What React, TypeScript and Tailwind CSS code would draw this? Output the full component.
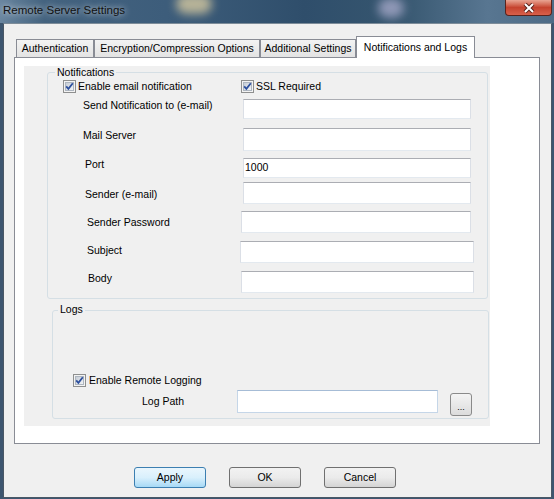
import React from "react";

type FieldProps = {
  label: string;
  row: string;
  labelBox: string;
  input: string;
  value?: string;
};

function CheckMark() {
  return (
    <svg width="13" height="13" viewBox="0 0 13 13" className="shrink-0">
      <defs>
        <linearGradient id="cbfill" x1="0" y1="0" x2="1" y2="1">
          <stop offset="0" stopColor="#c3cad4" />
          <stop offset="1" stopColor="#f4f6f8" />
        </linearGradient>
      </defs>
      <rect x="0.5" y="0.5" width="12" height="12" fill="#f3f3f3" stroke="#8e8f8f" />
      <rect x="2.5" y="2.5" width="8" height="8" fill="url(#cbfill)" stroke="#aeb6c0" />
      <path d="M3.2 6.3 L5.4 8.8 L9.8 3.2" fill="none" stroke="#2c4f9e" strokeWidth="1.8" />
    </svg>
  );
}

function Field(props: FieldProps) {
  return (
    <div className={"flex items-start " + props.row}>
      <span className={"leading-[13px] " + props.labelBox}>{props.label}</span>
      <div
        className={
          "bg-white border border-[#dbdfe6] border-t-[#abadb3] border-b-[#e3e9ef] flex items-center pl-px " +
          props.input
        }
      >
        {props.value}
      </div>
    </div>
  );
}

function WinButton(props: { label: string; primary?: boolean }) {
  return (
    <button
      className={
        props.primary
          ? "w-[72px] h-[21px] rounded-[3px] border border-[#3c7fb1] bg-gradient-to-b from-[#eaf6fd] via-[#d9f0fc] to-[#a7d9f5] text-[10.5px] text-black"
          : "w-[72px] h-[21px] rounded-[3px] border border-[#707070] bg-gradient-to-b from-[#f2f2f2] via-[#ebebeb] to-[#d4d4d4] text-[10.5px] text-black"
      }
    >
      {props.label}
    </button>
  );
}

const tabs = [
  { label: "Authentication", cls: "w-[78px]" },
  { label: "Encryption/Compression Options", cls: "w-[166px]" },
  { label: "Additional Settings", cls: "w-[96px]" },
];

export default function App() {
  return (
    <div className="w-[554px] h-[499px] overflow-hidden bg-[#3d5670] flex flex-col font-['Liberation_Sans',Arial,sans-serif] text-[10.5px] text-black">
      {/* title bar */}
      <div className="relative h-[23px] shrink-0 flex items-start justify-between bg-[linear-gradient(90deg,#6a86a0_0%,#44637f_8%,#3d5d7b_30%,#2f4e6b_55%,#36566f_72%,#587691_88%,#4d6b86_100%)]">
        <div className="absolute left-[176px] top-[-6px] w-[36px] h-[20px] rounded-full bg-[#d6c9a0] blur-[5px] opacity-80" />
        <div className="absolute left-[378px] top-[-2px] w-[26px] h-[20px] rounded-full bg-[#a5a8c8] blur-[5px] opacity-80" />
        <span className="relative pl-[3px] pt-[3px] text-[11.5px] leading-[14px] text-[#111] [text-shadow:0_0_6px_rgba(255,255,255,0.9)]">
          Remote Server Settings
        </span>
        <div className="relative mr-[2px] w-[47px] h-[16px] rounded-b-[4px] border border-t-0 border-[#5a231c] bg-gradient-to-b from-[#e8a493] via-[#c5432f] to-[#d8604a] flex items-center justify-center">
          <svg width="12" height="10" viewBox="0 0 12 10">
            <path d="M2 1 L10 9 M10 1 L2 9" stroke="#5a231c" strokeWidth="4" />
            <path d="M2 1 L10 9 M10 1 L2 9" stroke="#ffffff" strokeWidth="2" />
          </svg>
        </div>
      </div>

      {/* window body */}
      <div className="ml-[3px] w-[549px] h-[475px] bg-[#f0f0f0] border border-[#4a5866] border-t-[#7d8c99]">
        <div className="pl-[10px] pt-[12px]">
          {/* tab strip */}
          <div className="flex items-end h-[21px] pl-[2px]">
            {tabs.map((t) => (
              <div
                key={t.label}
                className={
                  "h-[18px] border border-b-0 border-[#898c95] bg-gradient-to-b from-[#f3f3f3] to-[#e3e3e3] flex items-center justify-center " +
                  t.cls
                }
              >
                {t.label}
              </div>
            ))}
            <div className="relative z-10 -mb-px w-[119px] h-[22px] border border-b-0 border-[#898c95] bg-white flex items-center justify-center">
              Notifications and Logs
            </div>
          </div>

          {/* tab page */}
          <div className="w-[526px] h-[387px] border border-[#898c95] bg-white pl-[9px] pt-[8px]">
            <div className="w-[466px] h-[360px] bg-[#f0f0f0] pt-[6px]">
              {/* Notifications group */}
              <div className="relative ml-[23px] w-[441px] h-[227px] border border-[#d5dfe5] rounded-[3px]">
                <span className="absolute left-[7px] -top-[7px] px-[2px] bg-[#f0f0f0] leading-[13px]">
                  Notifications
                </span>
                <div className="flex items-center h-[13px] mt-[7px] pl-[15px]">
                  <label className="w-[178px] flex items-center gap-[2px]">
                    <CheckMark />
                    <span>Enable email notification</span>
                  </label>
                  <label className="flex items-center gap-[2px]">
                    <CheckMark />
                    <span>SSL Required</span>
                  </label>
                </div>
                <Field
                  label="Send Notification to (e-mail)"
                  row="mt-[6px] pl-[35px]"
                  labelBox="w-[160px]"
                  input="w-[228px] h-[20px]"
                />
                <Field
                  label="Mail Server"
                  row="mt-[9px] pl-[35px]"
                  labelBox="w-[160px] pt-[1px]"
                  input="w-[228px] h-[23px]"
                />
                <Field
                  label="Port"
                  row="mt-[7px] pl-[37px]"
                  labelBox="w-[158px]"
                  input="w-[228px] h-[20px]"
                  value="1000"
                />
                <Field
                  label="Sender (e-mail)"
                  row="mt-[4px] pl-[37px]"
                  labelBox="w-[158px] pt-[6px]"
                  input="w-[228px] h-[22px]"
                />
                <Field
                  label="Sender Password"
                  row="mt-[7px] pl-[39px]"
                  labelBox="w-[154px] pt-[5px]"
                  input="w-[230px] h-[22px]"
                />
                <Field
                  label="Subject"
                  row="mt-[8px] pl-[39px]"
                  labelBox="w-[153px] pt-[3px]"
                  input="w-[234px] h-[22px]"
                />
                <Field
                  label="Body"
                  row="mt-[8px] pl-[40px]"
                  labelBox="w-[153px] pt-[1px]"
                  input="w-[233px] h-[22px]"
                />
              </div>

              {/* Logs group */}
              <div className="relative ml-[28px] mt-[11px] w-[437px] h-[109px] border border-[#d5dfe5] rounded-[3px]">
                <span className="absolute left-[5px] -top-[8px] px-[2px] bg-[#f0f0f0] leading-[13px]">
                  Logs
                </span>
                <label className="mt-[63px] ml-[20px] h-[13px] flex items-center gap-[3px]">
                  <CheckMark />
                  <span>Enable Remote Logging</span>
                </label>
                <div className="flex items-start mt-[3px] pl-[89px]">
                  <span className="w-[95px] pt-[5px] leading-[13px]">Log Path</span>
                  <div className="w-[201px] h-[23px] bg-white border border-[#c5d6e8] border-t-[#a6bcd6]" />
                  <button className="ml-[12px] mt-[3px] w-[22px] h-[23px] rounded-[3px] border border-[#8a8a8a] bg-gradient-to-b from-[#f4f4f4] to-[#dcdcdc] text-[9px] leading-[10px] pt-[4px]">
                    ...
                  </button>
                </div>
              </div>
            </div>
          </div>
        </div>

        {/* dialog buttons */}
        <div className="flex mt-[23px] pl-[130px] gap-[23px]">
          <WinButton label="Apply" primary />
          <WinButton label="OK" />
          <WinButton label="Cancel" />
        </div>
      </div>
    </div>
  );
}
